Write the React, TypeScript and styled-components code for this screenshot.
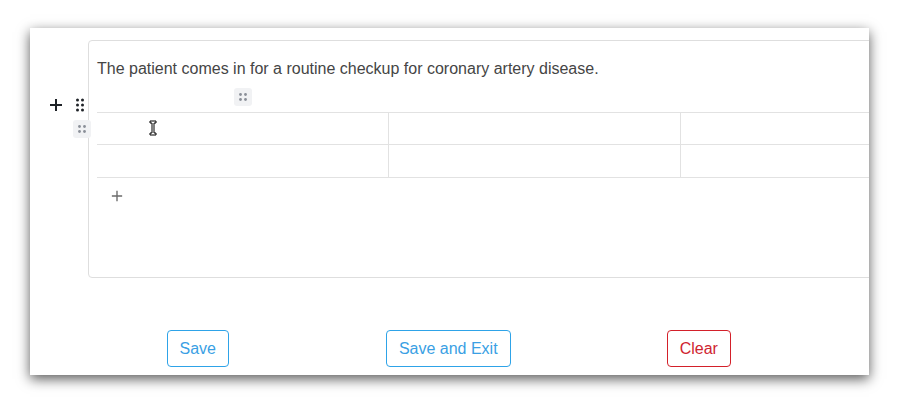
import React from "react";
import styled, { createGlobalStyle } from "styled-components";

const GlobalStyle = createGlobalStyle`
  html, body {
    margin: 0;
    padding: 0;
    background: #ffffff;
  }
  body {
    font-family: "Liberation Sans", Arial, sans-serif;
  }
`;

const COLUMNS = 3;
const ROWS = 2;

const Page = styled.div`
  padding: 28px 30px 0 30px;
  width: 899px;
  height: 407px;
  box-sizing: border-box;
  overflow: hidden;
`;

const Panel = styled.section`
  width: 839px;
  height: 347px;
  background: #fff;
  box-shadow: 0 4px 12px rgba(0, 0, 0, 0.65);
  overflow: hidden;
  display: flex;
  flex-direction: column;
`;

const EditorArea = styled.div`
  display: flex;
  padding-top: 12px;
`;

const Gutter = styled.div`
  width: 58px;
  flex-shrink: 0;
  padding-top: 58px;
  display: flex;
  gap: 10px;
  padding-left: 19px;
  box-sizing: border-box;
`;

const IconButton = styled.span<{ $color?: string }>`
  display: inline-flex;
  width: 14px;
  height: 14px;
  align-items: center;
  justify-content: center;
  color: ${(p) => p.$color || "#1f2328"};
`;

const Editor = styled.div`
  position: relative;
  width: 900px;
  height: 238px;
  flex-shrink: 0;
  border: 1px solid #dedede;
  border-radius: 4px;
  box-sizing: border-box;
  padding: 15px 0 0 8px;
`;

const Paragraph = styled.p`
  margin: 0;
  font-size: 16px;
  line-height: 25px;
  color: #454545;
`;

const HandleRow = styled.div`
  display: grid;
  grid-template-columns: repeat(${COLUMNS}, 292px);
  padding: 7px 0 6px;
`;

const Handle = styled.span`
  display: inline-flex;
  width: 18px;
  height: 18px;
  align-items: center;
  justify-content: center;
  background: #f1f2f4;
  border-radius: 3px;
  justify-self: center;
`;

const RowHandle = styled(Handle)`
  position: absolute;
  left: -16px;
  top: 79px;
`;

const Table = styled.div`
  display: grid;
  grid-template-columns: repeat(${COLUMNS}, 292px);
  border-top: 1px solid #e2e2e2;
`;

const Cell = styled.div<{ $last: boolean; $tall: boolean }>`
  height: ${(p) => (p.$tall ? 33 : 32)}px;
  box-sizing: border-box;
  border-bottom: 1px solid #e2e2e2;
  border-right: ${(p) => (p.$last ? "none" : "1px solid #e2e2e2")};
  position: relative;
`;

const AddRow = styled.div`
  padding: 10px 0 0 13px;
  color: #6b6b6b;
`;

const Cursor = styled.span`
  position: absolute;
  left: 52px;
  top: 7px;
  width: 8px;
  height: 16px;
`;

const Actions = styled.div`
  display: grid;
  grid-template-columns: repeat(3, 250.5px);
  padding-left: 42.5px;
  margin-top: 52px;
`;

const ActionButton = styled.button<{ $tone: "primary" | "danger" }>`
  justify-self: center;
  font-family: "Liberation Sans", Arial, sans-serif;
  font-size: 16px;
  line-height: 19px;
  height: 37px;
  padding: 8px 12px;
  background: #fff;
  border-radius: 4px;
  border: 1px solid ${(p) => (p.$tone === "danger" ? "#d3202a" : "#2ea3e8")};
  color: ${(p) => (p.$tone === "danger" ? "#cf2430" : "#3a9fe4")};
  cursor: pointer;
`;

const FourDots = () => (
  <svg width="10" height="10" viewBox="0 0 10 10">
    {[2.5, 7.5].map((y) =>
      [2.5, 7.5].map((x) => <circle key={`${x}-${y}`} cx={x} cy={y} r="1.4" fill="#8a8f98" />)
    )}
  </svg>
);

const SixDots = () => (
  <svg width="10" height="14" viewBox="0 0 10 14">
    {[2, 7, 12].map((y) =>
      [2.5, 7.5].map((x) => <circle key={`${x}-${y}`} cx={x} cy={y} r="1.5" fill="#1f2328" />)
    )}
  </svg>
);

const Plus = ({ size, stroke }: { size: number; stroke: number }) => (
  <svg width={size} height={size} viewBox="0 0 14 14">
    <path d="M7 1v12M1 7h12" stroke="currentColor" strokeWidth={stroke} fill="none" />
  </svg>
);

const IBeam = () => (
  <svg width="8" height="16" viewBox="0 0 8 16">
    <path
      d="M1 1h6v2H5v10h2v2H1v-2h2V3H1z"
      fill="#fff"
      stroke="#000"
      strokeWidth="1"
      strokeLinejoin="round"
    />
  </svg>
);

export default function App() {
  return (
    <>
      <GlobalStyle />
      <Page>
        <Panel>
          <EditorArea>
            <Gutter>
              <IconButton>
                <Plus size={14} stroke={2} />
              </IconButton>
              <IconButton>
                <SixDots />
              </IconButton>
            </Gutter>
            <Editor>
              <Paragraph>The patient comes in for a routine checkup for coronary artery disease.</Paragraph>
              <HandleRow>
                <Handle>
                  <FourDots />
                </Handle>
              </HandleRow>
              <RowHandle>
                <FourDots />
              </RowHandle>
              <Table>
                {Array.from({ length: ROWS * COLUMNS }).map((_, i) => (
                  <Cell
                    key={i}
                    $last={i % COLUMNS === COLUMNS - 1}
                    $tall={i >= COLUMNS}
                  >
                    {i === 0 && (
                      <Cursor>
                        <IBeam />
                      </Cursor>
                    )}
                  </Cell>
                ))}
              </Table>
              <AddRow>
                <IconButton $color="#6b6b6b">
                  <Plus size={12} stroke={1.6} />
                </IconButton>
              </AddRow>
            </Editor>
          </EditorArea>
          <Actions>
            <ActionButton $tone="primary">Save</ActionButton>
            <ActionButton $tone="primary">Save and Exit</ActionButton>
            <ActionButton $tone="danger">Clear</ActionButton>
          </Actions>
        </Panel>
      </Page>
    </>
  );
}
